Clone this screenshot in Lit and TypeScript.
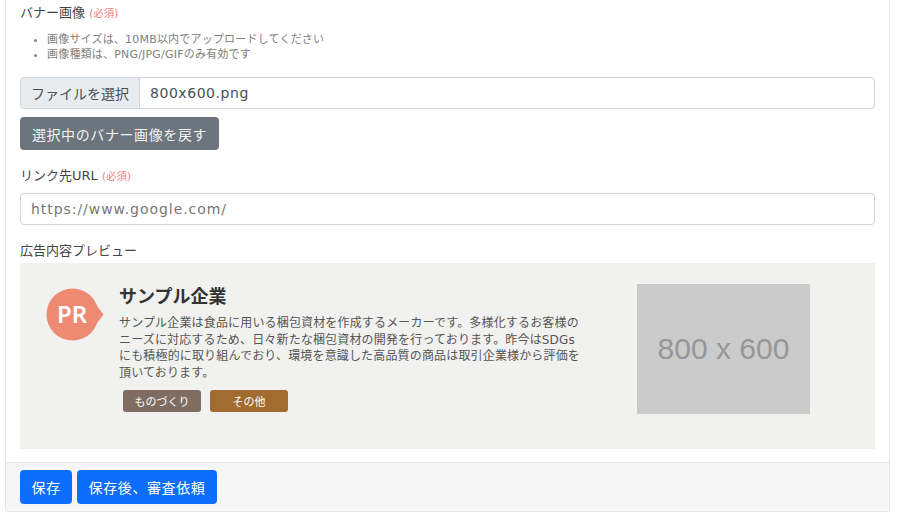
import { LitElement, html, css } from "lit";
import { customElement } from "lit/decorators.js";

@customElement("app-root")
export class AppRoot extends LitElement {
  static styles = css`
    :host {
      display: block;
      width: 900px;
      height: 522px;
      background: #fff;
      box-sizing: border-box;
      padding: 0 10px 10px 5px;
      font-family: "DejaVu Sans", "Noto Sans CJK JP", sans-serif;
      color: #212529;
      overflow: hidden;
    }
    .card {
      border: 1px solid #e6e6e6;
      border-top: 0;
      border-radius: 0 0 3px 3px;
      background: #fff;
    }
    .body {
      padding: 5px 14px 13px 14px;
    }
    .label {
      font-size: 13px;
      line-height: 16px;
      color: #444;
    }
    .req {
      font-size: 10.5px;
      color: #f58080;
    }
    ul {
      margin: 11px 0 0;
      padding: 0 0 0 27px;
      font-size: 11px;
      letter-spacing: 0.2px;
      line-height: 15px;
      color: #808080;
    }
    .input {
      height: 32px;
      box-sizing: border-box;
      border: 1px solid #ced4da;
      border-radius: 4px;
      display: flex;
      align-items: center;
      font-size: 14px;
      color: #495057;
      background: #fff;
      overflow: hidden;
    }
    .file { margin-top: 15px; letter-spacing: 0.55px; }
    .file-btn {
      height: 100%;
      width: 119px;
      flex: none;
      background: #e9ecef;
      border-right: 1px solid #ced4da;
      box-sizing: border-box;
      display: flex;
      align-items: center;
      justify-content: center;
      letter-spacing: 0;
    }
    .file-name { padding-left: 10px; }
    .reset {
      display: block;
      margin-top: 8px;
      width: 199px;
      height: 33px;
      border: 0;
      border-radius: 4px;
      background: #6c757d;
      color: #f2f2f2;
      font: inherit;
      font-size: 14px;
      letter-spacing: 0.6px;
      padding: 0;
    }
    .url-label { margin-top: 18px; }
    .url {
      margin-top: 9px;
      padding-left: 10px;
      color: #777;
      letter-spacing: 0.95px;
    }
    .prev-label { margin-top: 18px; }
    .preview {
      margin-top: 4px;
      height: 186px;
      background: #f1f1ef;
      display: flex;
      align-items: flex-start;
      padding: 21px 65px 0 26px;
      box-sizing: border-box;
    }
    .pr { flex: none; margin-top: 4px; }
    .content {
      margin-left: 15px;
      width: 470px;
    }
    .name {
      font-size: 18px;
      font-weight: 700;
      line-height: 22px;
      color: #333;
      font-family: "Noto Sans CJK JP", sans-serif;
    }
    .desc {
      margin-top: 9px;
      width: 465px;
      font-size: 12px;
      letter-spacing: 0.16px;
      line-height: 16.7px;
      color: #555;
    }
    .tags {
      margin-top: 8px;
      margin-left: 4px;
      display: flex;
      gap: 9px;
    }
    .tag {
      width: 78px;
      height: 22px;
      border-radius: 3px;
      color: #fff;
      font-size: 11px;
      display: flex;
      align-items: center;
      justify-content: center;
    }
    .t1 { background: #7f6c63; }
    .t2 { background: #a06c30; }
    .thumb {
      margin-left: auto;
      width: 173px;
      height: 130px;
      flex: none;
      background: #cbcbcb;
      color: #979797;
      font-family: "Liberation Sans", sans-serif;
      font-size: 30px;
      display: flex;
      align-items: center;
      justify-content: center;
    }
    .footer {
      border-top: 1px solid #e4e4e4;
      background: #f6f6f6;
      padding: 7px 14px 7px;
      display: flex;
      gap: 5px;
    }
    .primary {
      height: 34px;
      border: 0;
      border-radius: 4px;
      background: #0d6efd;
      color: #fff;
      font: inherit;
      font-size: 14px;
      letter-spacing: 0.6px;
      padding: 0;
    }
    .save { width: 52px; }
    .save2 { width: 140px; }
  `;

  render() {
    return html`
      <div class="card">
        <div class="body">
          <div class="label">バナー画像 <span class="req">(必須)</span></div>
          <ul>
            <li>画像サイズは、10MB以内でアップロードしてください</li>
            <li>画像種類は、PNG/JPG/GIFのみ有効です</li>
          </ul>
          <div class="input file">
            <div class="file-btn">ファイルを選択</div>
            <div class="file-name">800x600.png</div>
          </div>
          <button class="reset">選択中のバナー画像を戻す</button>
          <div class="label url-label">リンク先URL <span class="req">(必須)</span></div>
          <div class="input url">https://www.google.com/</div>
          <div class="label prev-label">広告内容プレビュー</div>
          <div class="preview">
            <svg class="pr" width="58" height="54" viewBox="0 0 58 54">
              <circle cx="26.5" cy="26.5" r="26" fill="#ee8a72" />
              <path d="M51 18 L57.5 26.5 L51 35 Z" fill="#ee8a72" />
              <text x="26" y="34.5" text-anchor="middle" fill="#fff" font-size="24" font-weight="600" font-family="Noto Sans, sans-serif">PR</text>
            </svg>
            <div class="content">
              <div class="name">サンプル企業</div>
              <div class="desc">サンプル企業は食品に用いる梱包資材を作成するメーカーです。多様化するお客様のニーズに対応するため、日々新たな梱包資材の開発を行っております。昨今はSDGsにも積極的に取り組んでおり、環境を意識した高品質の商品は取引企業様から評価を頂いております。</div>
              <div class="tags">
                <div class="tag t1">ものづくり</div>
                <div class="tag t2">その他</div>
              </div>
            </div>
            <div class="thumb">800 x 600</div>
          </div>
        </div>
        <div class="footer">
          <button class="primary save">保存</button>
          <button class="primary save2">保存後、審査依頼</button>
        </div>
      </div>
    `;
  }
}
